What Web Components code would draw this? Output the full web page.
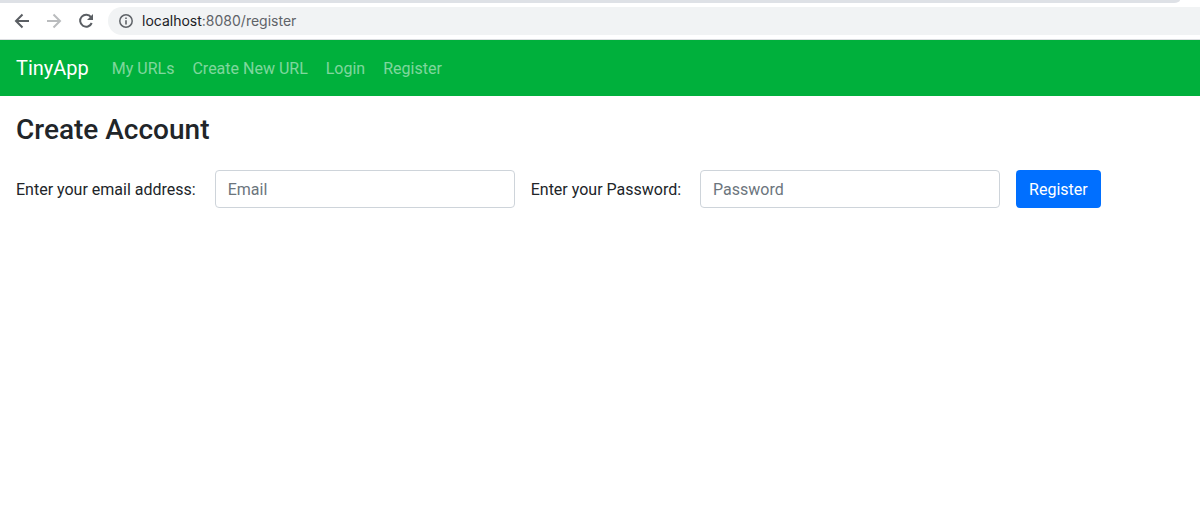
<!DOCTYPE html>
<html lang="en">
<head>
<meta charset="utf-8">
<title>TinyApp</title>
<style>
  body { margin: 0; background: #fff; color: #212529; font: 16px/24px Roboto, "Liberation Sans", sans-serif; }
</style>
</head>
<body>
<browser-toolbar host="localhost" path=":8080/register"></browser-toolbar>
<app-navbar brand="TinyApp">
  <nav-link href="#urls">My URLs</nav-link>
  <nav-link href="#new">Create New URL</nav-link>
  <nav-link href="#login">Login</nav-link>
  <nav-link href="#register">Register</nav-link>
</app-navbar>
<register-page></register-page>

<script>
class BaseElement extends HTMLElement {
  render(html) {
    const t = document.createElement('template');
    t.innerHTML = html;
    this.attachShadow({ mode: 'open' }).append(t.content.cloneNode(true));
  }
}

customElements.define('browser-toolbar', class extends BaseElement {
  connectedCallback() {
    this.render(`
      <style>
        :host { display: block; background: #fff; border-bottom: 1px solid #dcdee1; }
        .tabs { height: 3px; margin-right: 20px; background: #dee1e6; border-bottom-right-radius: 6px 3px; }
        .bar { display: flex; align-items: center; gap: 12px; padding: 4px 0 4px 12px; }
        button { display: flex; width: 20px; height: 20px; padding: 0; border: 0; background: none; color: #5a5e63; }
        button:disabled { color: #babcbe; }
        svg { width: 20px; height: 20px; flex: none; }
        .address { flex: 1; display: flex; align-items: center; gap: 6px; height: 28px; padding-left: 8px;
          background: #f1f3f4; border-radius: 14px 0 0 14px; font: 14px/20px Inter, "Liberation Sans", sans-serif; color: #5f6368; }
        .address svg { fill: none; stroke: #5f6368; }
        b { font-weight: 400; color: #202124; }
        button svg { fill: none; stroke: currentColor; stroke-width: 2; }
      </style>
      <div class="tabs"></div>
      <div class="bar">
        <button aria-label="Back"><svg viewBox="0 0 20 20"><path d="M17 10H4.500M10.500 3.500L4 10l6.500 6.500"/></svg></button>
        <button aria-label="Forward" disabled><svg viewBox="0 0 20 20"><path d="M3 10h12.500M9.500 3.500L16 10l-6.500 6.500"/></svg></button>
        <button aria-label="Reload"><svg viewBox="0 0 20 20"><path d="M15 6.200A6 6 0 1 0 15.700 12"/><path d="M17 3v6h-6z" fill="currentColor" stroke="none"/></svg></button>
        <div class="address">
          <svg viewBox="0 0 20 20"><circle cx="10" cy="10" r="6.200" stroke-width="1.500"/><path d="M10 9.200V13.500M10 6.500v1.600" stroke-width="1.600"/></svg>
          <span><b></b><span class="path"></span></span>
        </div>
      </div>`);
    this.shadowRoot.querySelector('b').textContent = this.getAttribute('host');
    this.shadowRoot.querySelector('.path').textContent = this.getAttribute('path');
  }
});

customElements.define('app-navbar', class extends BaseElement {
  connectedCallback() {
    this.render(`
      <style>
        :host { display: block; background: #00b03c; }
        nav { display: flex; align-items: center; gap: 18px; padding: 8px 16px; }
        a { margin-right: 5px; font-size: 20px; line-height: 40px; color: #fff; text-decoration: none; }
      </style>
      <nav><a href="#home"></a><slot></slot></nav>`);
    this.shadowRoot.querySelector('a').textContent = this.getAttribute('brand');
  }
});

customElements.define('nav-link', class extends BaseElement {
  connectedCallback() {
    this.render(`
      <style>
        :host { display: block; padding-top: 2px; }
        a { color: rgba(255, 255, 255, .5); text-decoration: none; white-space: nowrap; }
      </style>
      <a><slot></slot></a>`);
    this.shadowRoot.querySelector('a').href = this.getAttribute('href');
  }
});

customElements.define('form-field', class extends BaseElement {
  connectedCallback() {
    this.render(`
      <style>
        :host { display: flex; align-items: center; gap: 19px; }
        label { padding-top: 2px; white-space: nowrap; }
        input { box-sizing: border-box; width: 300px; height: 38px; padding: 6px 12px; border: 1px solid #ced4da;
          border-radius: 4px; background: #fff; color: #495057; font: inherit; }
        input::placeholder { color: #6c757d; opacity: 1; }
      </style>
      <label for="field"></label><input id="field">`);
    const input = this.shadowRoot.querySelector('input');
    this.shadowRoot.querySelector('label').textContent = this.getAttribute('label');
    input.type = this.getAttribute('type');
    input.placeholder = this.getAttribute('placeholder');
  }
});

customElements.define('register-page', class extends BaseElement {
  connectedCallback() {
    this.render(`
      <style>
        :host { display: block; padding: 16px; }
        h1 { margin: 0 0 22px; font-size: 28px; line-height: 36px; font-weight: 500; }
        form { display: flex; flex-wrap: wrap; align-items: center; gap: 16px; }
        button { height: 38px; padding: 2px 13px 0; border: 0; border-radius: 4px; background: #006fff; color: #fff; font: inherit; }
      </style>
      <main>
        <h1>Create Account</h1>
        <form>
          <form-field label="Enter your email address:" type="email" placeholder="Email"></form-field>
          <form-field label="Enter your Password:" type="password" placeholder="Password"></form-field>
          <button type="submit">Register</button>
        </form>
      </main>`);
  }
});
</script>
</body>
</html>
